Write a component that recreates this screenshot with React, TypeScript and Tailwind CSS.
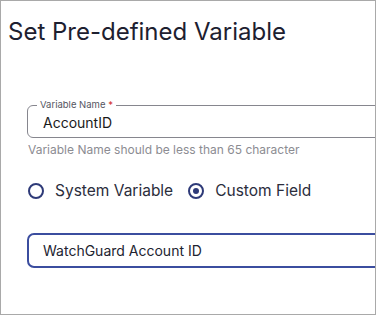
function RadioOption({ label, checked }: { label: string; checked?: boolean }) {
  return (
    <label className="flex items-center gap-[11px]">
      <span className="flex h-[16px] w-[16px] items-center justify-center rounded-full border-2 border-[#2e3a78]">
        {checked && <span className="h-[6px] w-[6px] rounded-full bg-[#2e3a78]" />}
      </span>
      <span className="text-[15.5px] text-[#2b2d3c]">{label}</span>
    </label>
  );
}

export default function App() {
  return (
    <div
      className="h-[315px] w-[376px] overflow-hidden border border-[#a9a9a9] bg-white"
      style={{ fontFamily: "Inter, 'Liberation Sans', sans-serif" }}
    >
      <h1 className="mt-[16px] pl-[7px] text-[24px] leading-[30px] text-[#1d2030]">
        Set Pre-defined Variable
      </h1>

      <form className="mt-[58px] pl-[26px]">
        <div className="relative h-[33px] w-[400px] rounded-[6px] border border-[#86868e]">
          <span className="absolute -top-[7px] left-[9px] bg-white px-[3px] text-[9.5px] leading-[12px] text-[#55565f]">
            Variable Name<span className="text-[#d32f2f]"> *</span>
          </span>
          <div className="pl-[15px] pt-[8px] text-[14px] leading-[18px] text-[#1a1a1a]">AccountID</div>
        </div>
        <p className="mt-[4px] pl-[1px] text-[12px] leading-[16px] text-[#8c8c92]">
          Variable Name should be less than 65 character
        </p>

        <div className="mt-[21px] flex items-center gap-[15px] pl-[1px]">
          <RadioOption label="System Variable" />
          <RadioOption label="Custom Field" checked />
        </div>

        <div className="mt-[31px] flex h-[35px] w-[400px] items-center rounded-[7px] border-2 border-[#3b4d9f] pl-[14px] text-[14px] text-[#222330]">
          WatchGuard Account ID
        </div>
      </form>
    </div>
  );
}
